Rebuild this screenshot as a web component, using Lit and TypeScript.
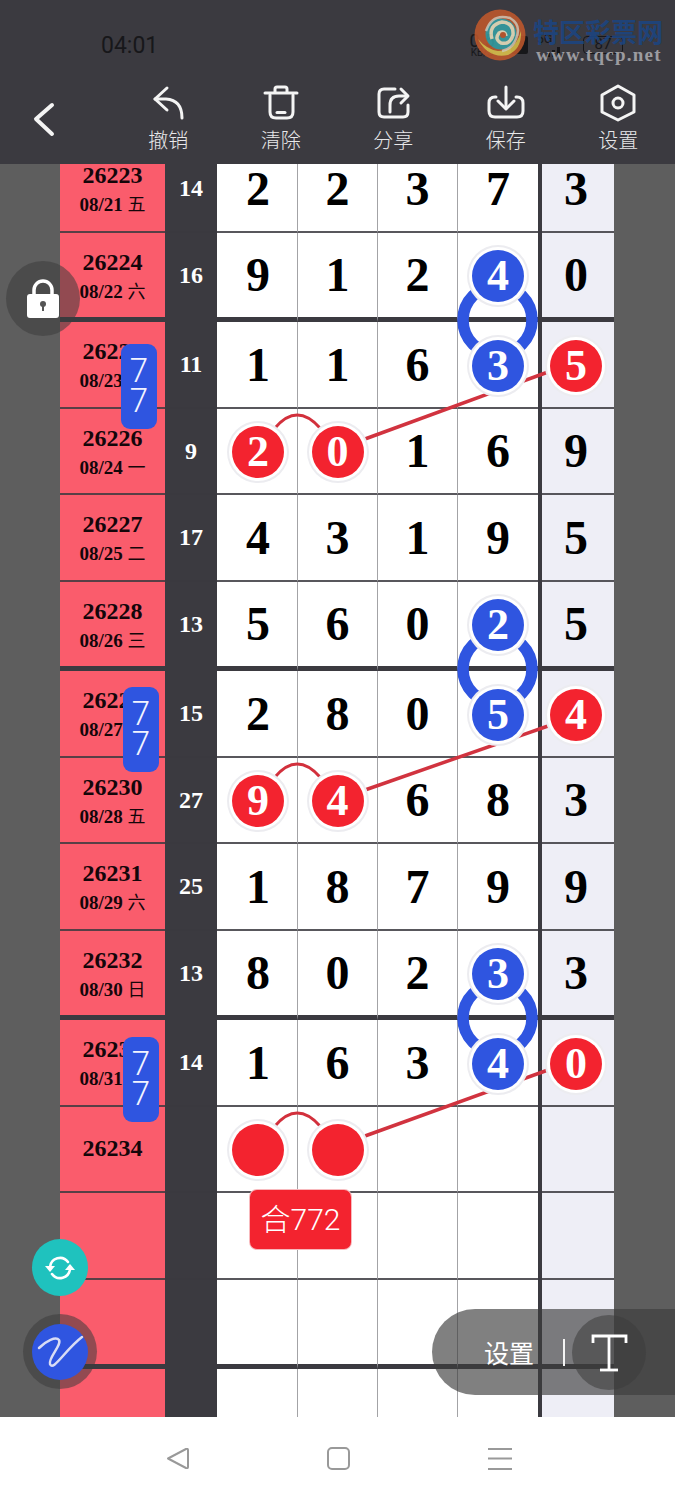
import { LitElement, html, css, svg } from "lit";
import { customElement } from "lit/decorators.js";

type Ball = { v: string; c: "r" | "b" };
type Cell = string | Ball | null;
const R = (v: string): Ball => ({ v, c: "r" });
const B = (v: string): Ball => ({ v, c: "b" });

const rows: { n: string; d: string; s: string; cells: Cell[]; thick?: boolean }[] = [
  { n: "26223", d: "08/21 五", s: "14", cells: ["2", "2", "3", "7", "3"] },
  { n: "26224", d: "08/22 六", s: "16", cells: ["9", "1", "2", B("4"), "0"], thick: true },
  { n: "26225", d: "08/23 日", s: "11", cells: ["1", "1", "6", B("3"), R("5")] },
  { n: "26226", d: "08/24 一", s: "9", cells: [R("2"), R("0"), "1", "6", "9"] },
  { n: "26227", d: "08/25 二", s: "17", cells: ["4", "3", "1", "9", "5"] },
  { n: "26228", d: "08/26 三", s: "13", cells: ["5", "6", "0", B("2"), "5"], thick: true },
  { n: "26229", d: "08/27 四", s: "15", cells: ["2", "8", "0", B("5"), R("4")] },
  { n: "26230", d: "08/28 五", s: "27", cells: [R("9"), R("4"), "6", "8", "3"] },
  { n: "26231", d: "08/29 六", s: "25", cells: ["1", "8", "7", "9", "9"] },
  { n: "26232", d: "08/30 日", s: "13", cells: ["8", "0", "2", B("3"), "3"], thick: true },
  { n: "26233", d: "08/31 一", s: "14", cells: ["1", "6", "3", B("4"), R("0")] },
  { n: "26234", d: "", s: "", cells: [R(""), R(""), null, null, null] },
  { n: "", d: "", s: "", cells: [null, null, null, null, null] },
  { n: "", d: "", s: "", cells: [null, null, null, null, null], thick: true },
  { n: "", d: "", s: "", cells: [null, null, null, null, null] },
];

const connectors = (ringY: number, arcY: number, x1y: number, x2y: number) => svg`
  <circle class="ring" cx="497.5" cy=${ringY} r="34.5"></circle>
  <path class="arc" d="M275 ${arcY + 13} Q297 ${arcY - 13} 320 ${arcY + 13}"></path>
  <path class="link" d="M365 ${x1y} L548 ${x2y}"></path>`;

@customElement("app-root")
export class AppRoot extends LitElement {
  static styles = css`
    :host { display: block; position: relative; width: 675px; height: 1500px; overflow: hidden; background: #fff; font-family: "Liberation Serif", "Noto Sans CJK SC", serif; }
    .head { height: 164px; background: #3b3a40; display: flex; flex-direction: column; }
    .status { height: 80px; padding: 0 52px 0 101px; box-sizing: border-box; display: flex; align-items: center; color: #17171a; font-family: Roboto, sans-serif; }
    .time { font-size: 23px; margin-top: 10px; }
    .right { margin-left: auto; display: flex; align-items: center; margin-top: 10px; }
    .speed { display: flex; flex-direction: column; align-items: center; line-height: 1; font-size: 18px; width: 22px; }
    .speed small { font-size: 10px; margin-top: -2px; }
    .sim { width: 17px; height: 18px; background: #17171a; border-radius: 2px; margin-left: 18px; }
    .net { margin-left: 9px; width: 28px; font-size: 12px; line-height: 1; display: flex; flex-direction: column; }
    .bars { height: 10px; margin: 2px 0 0 10px; }
    .batt { margin-left: 18px; width: 40px; height: 18px; border: 1.5px solid #17171a; border-radius: 4px; box-sizing: border-box; font-size: 15px; line-height: 15px; text-align: center; }

    .tools { flex: 1; display: flex; align-items: flex-start; position: relative; }
    .back { width: 112px; height: 84px; flex: none; }
    .back svg, .tool svg { display: block; }
    .tool { width: 112.5px; padding-top: 4px; display: flex; flex-direction: column; align-items: center; flex: none; color: #e8e8ea; font-family: "Noto Sans CJK SC", sans-serif; font-size: 20px; line-height: 28px; font-weight: 300; }
    .tool span { margin-top: 2px; }
    svg.ic { fill: none; stroke: #f4f4f4; stroke-width: 3; stroke-linecap: round; stroke-linejoin: round; }

    .watermark { position: absolute; left: 474px; top: 9px; width: 195px; height: 54px; }
    .logo { position: absolute; left: 0; top: 0; opacity: .85; }
    .cn { position: absolute; left: 59px; top: 6px; font: 700 26px/32px "Noto Sans CJK SC", sans-serif; color: #1c4580; opacity: .9; white-space: nowrap; }
    .url { position: absolute; left: 62px; top: 35px; font: 700 19px/22px "Liberation Serif", serif; letter-spacing: 1.25px; color: #9c9ca0; white-space: nowrap; }

    .main { position: relative; height: 1253px; overflow: hidden; background: #5e5e5e; }
    .rows { margin-top: -18px; }
    .row { display: grid; grid-template-columns: 60px 105px 52px 81px 80px 80px 80px 4px 72px 61px; height: 86.5px; }
    .row.thick { height: 89.5px; }
    .row > div { box-sizing: border-box; }
    .num, .sum, .c { border-bottom: 2px solid rgba(59, 58, 64, .85); }
    .thick .num, .thick .sum, .thick .c { border-bottom: 5px solid #3b3a40; }
    .num { grid-column: 2; background: #fa5c6c; color: #14060a; display: flex; flex-direction: column; align-items: center; justify-content: center; }
    .num b { font-size: 24px; line-height: 28px; margin-top: -1px; }
    .num i { font-style: normal; font-weight: 700; font-size: 19px; line-height: 28px; margin-bottom: -5px; white-space: nowrap; }
    .num i span { font-family: "Noto Sans CJK SC", sans-serif; font-weight: 400; font-size: 18px; }
    .sum { background: #3b3a40; color: #fff; font-weight: 700; font-size: 24px; padding-top: 1px; display: flex; align-items: center; justify-content: center; }
    .c { background: #fff; color: #000; font-weight: 700; font-size: 48px; display: flex; align-items: center; justify-content: center; border-right: 1px solid #a3a3a6; }
    .c.c0 { padding-left: 2px; }
    .c.c3 { border-right: 0; }
    .sep { background: #3b3a40; }
    .c.light { background: #eeeef6; border-right: 0; padding-right: 4px; }
    .ball { position: relative; z-index: 2; flex: none; width: 52px; height: 52px; margin-top: 3px; border-radius: 50%; color: #fff; font-size: 44px; line-height: 52px; text-align: center; box-shadow: 0 0 0 3px #fff, 0 0 0 5px #ececf0; }
    .ball.r { background: #f3232f; }
    .ball.b { background: #2f55e0; }
    .lines { position: absolute; left: 0; top: 0; z-index: 1; pointer-events: none; }
    .ring { fill: none; stroke: #2f55e0; stroke-width: 11.5; }
    .arc { fill: none; stroke: #d2303c; stroke-width: 3; }
    .link { fill: none; stroke: #d1333f; stroke-width: 3.5; }

    .tag { position: absolute; z-index: 3; width: 36px; height: 85px; background: #2f55e0; border-radius: 9px; color: #f2f4ff; font: 300 33px/30px Roboto, sans-serif; text-align: center; padding-top: 12px; box-sizing: border-box; }
    .he { position: absolute; z-index: 3; left: 250px; top: 1026px; width: 101px; height: 59px; background: #f3232f; border-radius: 7px; color: #fff; font: 300 30px/59px Roboto, "Noto Sans CJK SC", sans-serif; text-align: center; white-space: nowrap; box-shadow: 0 0 0 1px #f8b9bd; }

    .float { position: absolute; z-index: 5; }
    .lock { left: 6px; top: 261px; width: 74px; height: 75px; border-radius: 50%; background: rgba(60, 60, 60, .55); display: flex; align-items: center; justify-content: center; }
    .sync { left: 32px; top: 1239px; width: 56px; height: 57px; border-radius: 50%; background: #1fc2be; display: flex; align-items: center; justify-content: center; }
    .pen { left: 23px; top: 1314px; width: 74px; height: 75px; border-radius: 50%; background: rgba(60, 60, 60, .55); display: flex; align-items: center; justify-content: center; }
    .pen div { width: 56px; height: 56px; border-radius: 50%; background: #2f55e0; }
    .pill { left: 432px; top: 1309px; width: 290px; height: 86px; border-radius: 43px; background: rgba(60, 60, 60, .65); display: flex; align-items: center; color: #fff; font: 400 25px "Noto Sans CJK SC", sans-serif; }
    .pill span { margin-left: 52px; }
    .pill em { display: block; width: 2px; height: 27px; background: #f4f4f4; margin-left: 29px; }
    .pill .tc { position: absolute; left: 140px; top: 6px; width: 74px; height: 75px; border-radius: 50%; background: rgba(60, 60, 60, .55); display: flex; align-items: center; justify-content: center; }

    .nav { height: 83px; background: #fff; position: relative; display: flex; align-items: flex-start; padding: 30px 0 0 166px; box-sizing: border-box; gap: 138px; }
    .nav svg { fill: none; stroke: #999; stroke-width: 2; stroke-linejoin: round; display: block; }
    .nav svg:nth-child(2) { margin-left: -1px; }
  `;

  private cell(v: Cell, i: number) {
    const cls = `c c${i} ${i === 4 ? "light" : ""}`;
    if (i === 4) return html`<div class="sep"></div><div class=${cls}>${this.content(v)}</div>`;
    return html`<div class=${cls}>${this.content(v)}</div>`;
  }

  private content(v: Cell) {
    if (v === null) return "";
    if (typeof v === "string") return v;
    return html`<div class="ball ${v.c}">${v.v}</div>`;
  }

  private date(d: string) {
    if (!d) return "";
    const [a, b] = d.split(" ");
    return html`<i>${a} <span>${b}</span></i>`;
  }

  render() {
    return html`
      <div class="head">
        <div class="status">
          <div class="time">04:01</div>
          <div class="right">
            <div class="speed">0.5<small>KB/S</small></div>
            <div class="sim"></div>
            <div class="net">5G
              <svg class="bars" width="18" height="10" viewBox="0 0 18 10" fill="#17171a"><rect x="0" y="6" width="3" height="4"/><rect x="5" y="3" width="3" height="7"/><rect x="10" y="0" width="3" height="10"/></svg>
            </div>
            <div class="batt">87</div>
          </div>
        </div>
        <div class="tools">
          <div class="back">
            <svg class="ic" width="112" height="84" viewBox="0 80 112 84" style="stroke-width:4"><path d="M52 105 L36 119 L52 134"/></svg>
          </div>
          <div class="tool">
            <svg class="ic" width="40" height="40" viewBox="148 84 40 40"><path d="M167 88 L155 99 L167 110"/><path d="M155 99 H166 Q182 100 182 118"/></svg>
            <span>撤销</span>
          </div>
          <div class="tool">
            <svg class="ic" width="40" height="40" viewBox="261 84 40 40"><path d="M265 93 H297"/><path d="M275 92 V89 Q275 87 277 87 H285 Q287 87 287 89 V92"/><path d="M270 95 V112 Q270 118 276 118 H287 Q293 118 293 112 V95"/><path d="M277 112.5 H285"/></svg>
            <span>清除</span>
          </div>
          <div class="tool">
            <svg class="ic" width="40" height="40" viewBox="374 84 40 40"><path d="M396 89 H385 Q380 89 380 94 V112 Q380 117 385 117 H404 Q409 117 409 112 V105"/><path d="M391 112 V105 Q391 96 400 96 H408"/><path d="M402 89 L409 96 L402 103"/></svg>
            <span>分享</span>
          </div>
          <div class="tool">
            <svg class="ic" width="40" height="40" viewBox="487 84 40 40"><path d="M497 97 H496 Q490 97 490 103 V111 Q490 117 496 117 H518 Q524 117 524 111 V103 Q524 97 518 97 H517"/><path d="M507 87 V108"/><path d="M499 101 L507 109 L515 101"/></svg>
            <span>保存</span>
          </div>
          <div class="tool">
            <svg class="ic" width="40" height="40" viewBox="599 84 40 40"><path d="M619 86 L635 95 V112 L619 120 L603 112 V95 Z"/><circle cx="619" cy="103" r="5"/></svg>
            <span>设置</span>
          </div>
        </div>
      </div>

      <div class="watermark">
        <svg class="logo" width="52" height="52" viewBox="0 0 52 52">
          <circle cx="26" cy="26" r="25.5" fill="#c4592c"/>
          <path d="M4 30 Q14 50 34 46 Q48 40 47 22 Q42 42 24 42 Q12 40 4 30Z" fill="#e3c84c"/>
          <circle cx="27" cy="25" r="15.5" fill="#35a3a8"/>
          <path d="M12 22 Q18 4 36 9 Q48 16 42 30 Q38 40 28 42" fill="none" stroke="#e9e2d2" stroke-width="2.5" opacity=".8"/>
          <path d="M18 30 Q14 16 28 13 Q40 14 39 26 Q36 36 27 34 Q20 30 25 24 Q31 21 32 27" fill="none" stroke="#efe7c4" stroke-width="3.5"/>
          <circle cx="29" cy="26" r="3" fill="#c4592c"/>
        </svg>
        <div class="cn">特区彩票网</div>
        <div class="url">www.tqcp.net</div>
      </div>

      <div class="main">
        <div class="rows">
          ${rows.map(
            (r) => html`
              <div class="row ${r.thick ? "thick" : ""}">
                <div class="num">${r.n ? html`<b>${r.n}</b>` : ""}${this.date(r.d)}</div>
                <div class="sum">${r.s}</div>
                ${r.cells.map((c, i) => this.cell(c, i))}
              </div>
            `
          )}
        </div>
        <svg class="lines" width="675" height="1253" viewBox="0 164 675 1253">
          ${connectors(320, 415, 439, 372)}
          ${connectors(669, 764, 790, 726)}
          ${connectors(1018, 1113, 1136, 1070)}
        </svg>
        <div class="tag" style="left:121px;top:180px">7<br />7</div>
        <div class="tag" style="left:123px;top:523px">7<br />7</div>
        <div class="tag" style="left:123px;top:873px">7<br />7</div>
        <div class="he">合772</div>
      </div>

      <div class="nav">
        <svg width="23" height="23" viewBox="0 0 23 23"><path d="M2 11.5 L20 2 Q22 1.5 22 3 V20 Q22 21.5 20 21 Z"/></svg>
        <svg width="24" height="23" viewBox="0 0 24 23"><rect x="2" y="1" width="21" height="21" rx="4"/></svg>
        <svg width="24" height="23" viewBox="0 0 24 23"><path d="M0 2 H24 M0 11.5 H24 M0 22 H24"/></svg>
      </div>

      <div class="float lock">
        <svg width="34" height="40" viewBox="0 0 34 40">
          <path d="M8 17 V11 A9 9 0 0 1 26 11 V17" fill="none" stroke="#fff" stroke-width="3.5"/>
          <rect x="1" y="15" width="32" height="24" rx="3" fill="#fff"/>
          <circle cx="17" cy="25" r="3" fill="#555"/><rect x="16" y="25" width="2" height="7" fill="#555"/>
        </svg>
      </div>
      <div class="float sync">
        <svg width="32" height="28" viewBox="0 0 32 28" fill="none" stroke="#fff" stroke-width="2.6" stroke-linecap="round">
          <path d="M6 13 A10 10 0 0 1 24 8"/>
          <path d="M26 15 A10 10 0 0 1 8 20"/>
          <path d="M1 12 H11 L6 18 Z" fill="#fff" stroke="none"/>
          <path d="M21 16 H31 L26 10 Z" fill="#fff" stroke="none"/>
        </svg>
      </div>
      <div class="float pen">
        <div>
          <svg width="56" height="56" viewBox="32 1324 56 56" fill="none" stroke="#d8dcf5" stroke-width="2.5" stroke-linecap="round">
            <path d="M39 1348 C46 1341 56 1336 59 1340 C62 1345 48 1358 50 1364 C53 1372 65 1350 82 1337"/>
          </svg>
        </div>
      </div>
      <div class="float pill">
        <span>设置</span><em></em>
        <div class="tc">
          <svg width="38" height="42" viewBox="590 1331 38 42" fill="none" stroke="#fff" stroke-width="2.8">
            <path d="M593 1342 V1335 H626 V1342"/><path d="M609 1335 V1369"/><path d="M600 1369 H618"/>
          </svg>
        </div>
      </div>
    `;
  }
}
